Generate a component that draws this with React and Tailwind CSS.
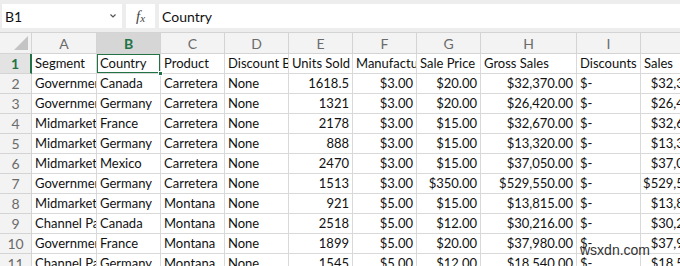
import React from 'react';

const COLS = [
  { key: 'A', w: 'w-[65px]' },
  { key: 'B', w: 'w-[64px]' },
  { key: 'C', w: 'w-[64px]' },
  { key: 'D', w: 'w-[64px]' },
  { key: 'E', w: 'w-[64px]' },
  { key: 'F', w: 'w-[64px]' },
  { key: 'G', w: 'w-[64px]' },
  { key: 'H', w: 'w-[96px]' },
  { key: 'I', w: 'w-[64px]' },
  { key: 'J', w: 'w-[80px]' },
];

// numbers sit at the right of their cell
const RIGHT = [false, false, false, false, true, true, true, true, false, true];

const ROWS = [
  ['Segment', 'Country', 'Product', 'Discount Band', 'Units Sold', 'Manufacturing Price', 'Sale Price', 'Gross Sales', 'Discounts', 'Sales'],
  ['Government', 'Canada', 'Carretera', 'None', '1618.5', '$3.00', '$20.00', '$32,370.00', '$-', '$32,370.00'],
  ['Government', 'Germany', 'Carretera', 'None', '1321', '$3.00', '$20.00', '$26,420.00', '$-', '$26,420.00'],
  ['Midmarket', 'France', 'Carretera', 'None', '2178', '$3.00', '$15.00', '$32,670.00', '$-', '$32,670.00'],
  ['Midmarket', 'Germany', 'Carretera', 'None', '888', '$3.00', '$15.00', '$13,320.00', '$-', '$13,320.00'],
  ['Midmarket', 'Mexico', 'Carretera', 'None', '2470', '$3.00', '$15.00', '$37,050.00', '$-', '$37,050.00'],
  ['Government', 'Germany', 'Carretera', 'None', '1513', '$3.00', '$350.00', '$529,550.00', '$-', '$529,550.00'],
  ['Midmarket', 'Germany', 'Montana', 'None', '921', '$5.00', '$15.00', '$13,815.00', '$-', '$13,815.00'],
  ['Channel Partners', 'Canada', 'Montana', 'None', '2518', '$5.00', '$12.00', '$30,216.00', '$-', '$30,216.00'],
  ['Government', 'France', 'Montana', 'None', '1899', '$5.00', '$20.00', '$37,980.00', '$-', '$37,980.00'],
  ['Channel Partners', 'Germany', 'Montana', 'None', '1545', '$5.00', '$12.00', '$18,540.00', '$-', '$18,540.00'],
];

function Cell({ col, value, row }) {
  const right = row > 0 && RIGHT[col];
  const selected = row === 0 && col === 1;
  return (
    <div
      className={`${COLS[col].w} shrink-0 h-full border-r border-b border-[#d9d9d9] relative overflow-hidden whitespace-nowrap flex items-center ${
        right ? 'justify-end pr-[3px]' : 'pl-[3px]'
      }`}
    >
      {value}
      {selected && (
        <div className="absolute -left-px -top-px right-[-1px] bottom-[-1px] border-2 border-[#217346]" />
      )}
    </div>
  );
}

export default function App() {
  return (
    <div className="w-[680px] h-[266px] overflow-hidden bg-white relative font-['Lato',sans-serif] text-[13px] text-[#111]">
      {/* formula bar */}
      <div className="h-[33px] bg-[#ededed] border-b border-[#d4d4d4] flex items-center pl-[2px] gap-[4px] text-[14px]">
        <div className="w-[120px] h-[24px] bg-white flex items-center justify-between pl-[3px] pr-[5px]">
          <span>B1</span>
          <svg width="8" height="6" viewBox="0 0 8 6" className="text-[#555]">
            <path d="M1.5 1.5 L4 4 L6.5 1.5" fill="none" stroke="currentColor" strokeWidth="1.2" />
          </svg>
        </div>
        <div className="w-[29px] h-[24px] bg-white flex items-center justify-center text-[#444] font-['Liberation_Serif',serif] italic text-[15px]">
          f<span className="text-[11px] mt-[4px]">x</span>
        </div>
        <div className="flex-1 h-[24px] bg-white flex items-center pl-[3px]">Country</div>
      </div>

      {/* column headers */}
      <div className="flex h-[21px] bg-[#f3f3f3] text-[#6b6b6b] text-[14px]">
        <div className="w-[32px] shrink-0 h-full border-r border-b border-[#d4d4d4] relative">
          <svg width="16" height="16" viewBox="0 0 16 16" className="absolute right-[2px] bottom-[2px]">
            <path d="M15 1 L15 15 L1 15 Z" fill="#c4c4c4" />
          </svg>
        </div>
        {COLS.map((c) => (
          <div
            key={c.key}
            className={`${c.w} shrink-0 h-full border-r border-b border-[#d4d4d4] flex items-center justify-center ${
              c.key === 'B' ? 'bg-[#d6d6d6] text-[#217346] font-bold' : ''
            }`}
          >
            {c.key === 'J' ? '' : c.key}
          </div>
        ))}
      </div>

      {/* rows */}
      {ROWS.map((r, ri) => (
        <div key={ri} className="flex h-[20px]">
          <div
            className={`w-[32px] shrink-0 h-full border-b border-r flex items-center justify-center text-[14px] ${
              ri === 0
                ? 'bg-[#e3e3e3] text-[#217346] font-bold border-r-2 border-r-[#217346] border-b-[#d4d4d4]'
                : 'bg-[#f3f3f3] text-[#6b6b6b] border-[#d4d4d4]'
            }`}
          >
            {ri + 1}
          </div>
          {r.map((v, ci) => (
            <Cell key={ci} col={ci} value={v} row={ri} />
          ))}
        </div>
      ))}

      {/* selection handle */}
      <div className="absolute left-[158px] top-[71px] w-[5px] h-[5px] bg-[#217346] border border-white" />

      <div className="absolute left-[580px] top-[240px] text-[14px] text-[#333] font-['Liberation_Sans',sans-serif]">
        wsxdn.com
      </div>
    </div>
  );
}
